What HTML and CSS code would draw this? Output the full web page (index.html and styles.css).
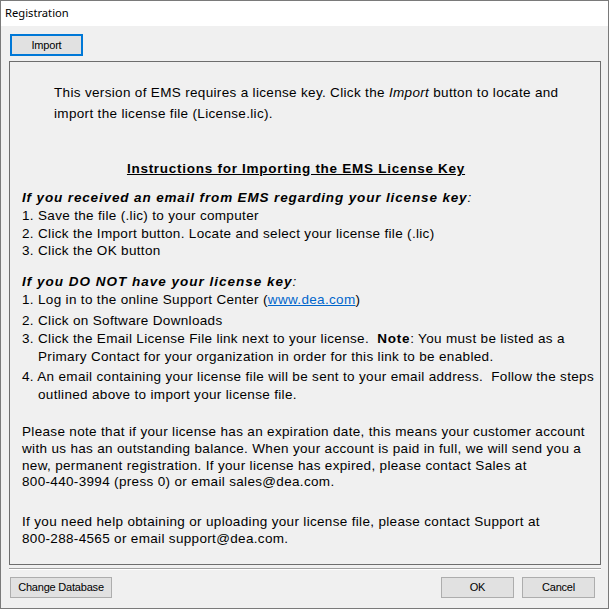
FILE: index.html
```html
<!DOCTYPE html>
<html>
<head>
<meta charset="utf-8">
<link rel="stylesheet" href="styles.css">
</head>
<body>
<div class="window">
  <div class="titlebar">Registration</div>
  <div class="client">
    <div class="toprow"><button class="btn btn-focus btn-import">Import</button></div>
    <div class="panel">
      <p class="intro">This version of EMS requires a license key. Click the <i>Import</i> button to locate and<br>import the license file (License.lic).</p>
      <h1 class="title"><span>Instructions for Importing the EMS License Key</span></h1>
      <div class="section sec1">
        <h2 class="sub">If you received an email from EMS regarding your license key<span class="colon">:</span></h2>
        <ol class="steps">
          <li>1. Save the file (.lic) to your computer</li>
          <li>2. Click the Import button. Locate and select your license file (.lic)</li>
          <li>3. Click the OK button</li>
        </ol>
      </div>
      <div class="section sec2">
        <h2 class="sub">If you DO NOT have your license key<span class="colon">:</span></h2>
        <ol class="steps">
          <li class="gap3">1. Log in to the online Support Center (<a class="link">www.dea.com</a>)</li>
          <li>2. Click on Software Downloads</li>
          <li class="gap2">3. Click the Email License File link next to your license.&nbsp; <b>Note</b>: You must be listed as a<br>Primary Contact for your organization in order for this link to be enabled.</li>
          <li>4. An email containing your license file will be sent to your email address.&nbsp; Follow the steps<br>outlined above to import your license file.</li>
        </ol>
      </div>
      <p class="note">Please note that if your license has an expiration date, this means your customer account<br>with us has an outstanding balance. When your account is paid in full, we will send you a<br>new, permanent registration. If your license has expired, please contact Sales at<br>800-440-3994 (press 0) or email sales@dea.com.</p>
      <p class="note note2">If you need help obtaining or uploading your license file, please contact Support at<br>800-288-4565 or email support@dea.com.</p>
    </div>
    <div class="separator"></div>
    <div class="footer">
      <button class="btn btn-db">Change Database</button>
      <div class="spacer"></div>
      <button class="btn btn-ok">OK</button>
      <button class="btn btn-cancel">Cancel</button>
    </div>
  </div>
</div>
</body>
</html>
```
FILE: styles.css
```css
* { box-sizing: border-box; }
html, body { margin: 0; padding: 0; background: #f0f0f0; }
.window {
  width: 609px;
  height: 609px;
  border: 1px solid #7a7a7a;
  background: #f0f0f0;
  display: flex;
  flex-direction: column;
}
.titlebar {
  height: 25px;
  flex: none;
  background: #ffffff;
  padding-left: 4px;
  font-family: "Noto Sans", "Open Sans", sans-serif;
  font-size: 11.2px;
  line-height: 23px;
  color: #000;
}
.client {
  flex: 1;
  display: flex;
  flex-direction: column;
  padding: 0 7px 0 8px;
}
.toprow { display: flex; margin-top: 8px; }
.btn {
  font-family: "Liberation Sans", Arial, sans-serif;
  font-size: 11px;
  letter-spacing: -0.2px;
  color: #000;
  background: #e1e1e1;
  border: 1px solid #adadad;
  padding: 0;
  margin: 0;
  height: 21px;
  line-height: 19px;
}
.btn-focus { border: 2px solid #0078d7; height: 22px; }
.btn-import { width: 73px; margin-left: 1px; }
.panel {
  margin-top: 5px;
  height: 504px;
  flex: none;
  border: 1px solid #6d6d6d;
  font-family: "Liberation Sans", Arial, sans-serif;
  font-size: 13.5px;
  letter-spacing: 0.33px;
  color: #000;
  padding: 0 10px 0 12px;
}
.panel p, .panel h1, .panel h2, .panel ol, .panel li { margin: 0; padding: 0; }
.intro {
  margin-top: 20px !important;
  margin-left: 32px !important;
  line-height: 21px;
  white-space: nowrap;
}
.intro i { font-style: italic; }
.title {
  margin-top: 35.6px !important;
  font-size: 13.5px;
  font-weight: bold;
  letter-spacing: 0.73px;
  line-height: 17.7px;
  text-align: center;
  width: 548px;
}
.title span { text-decoration: underline; }
.sub {
  font-size: 13.5px;
  font-weight: bold;
  font-style: italic;
  letter-spacing: 0.86px;
  white-space: nowrap;
}
.sec2 .sub { letter-spacing: 1.0px; }
.sub .colon { font-weight: normal; }
.steps { list-style: none; }
.steps li {
  white-space: nowrap;
  padding-left: 16px !important;
  text-indent: -16px;
}
.steps b { letter-spacing: 0.73px; }
.sec1 { margin-top: 12px; line-height: 17.7px; }
.sec2 { margin-top: 12.4px; line-height: 18px; }
.gap3 { margin-bottom: 3px !important; }
.gap2 { margin-bottom: 2px !important; }
.link { color: #0066cc; text-decoration: underline; }
.note {
  margin-top: 20.6px !important;
  line-height: 16.7px;
  white-space: nowrap;
}
.note2 { margin-top: 23.2px !important; }
.separator {
  margin-top: 3px;
  height: 2px;
  flex: none;
  border-top: 1px solid #a0a0a0;
  border-bottom: 1px solid #ffffff;
}
.footer {
  display: flex;
  margin-top: 7px;
  padding: 0 6px 0 1px;
}
.spacer { flex: 1; }
.btn-db { width: 102px; }
.btn-ok { width: 73px; margin-right: 8px; }
.btn-cancel { width: 73px; }
```
